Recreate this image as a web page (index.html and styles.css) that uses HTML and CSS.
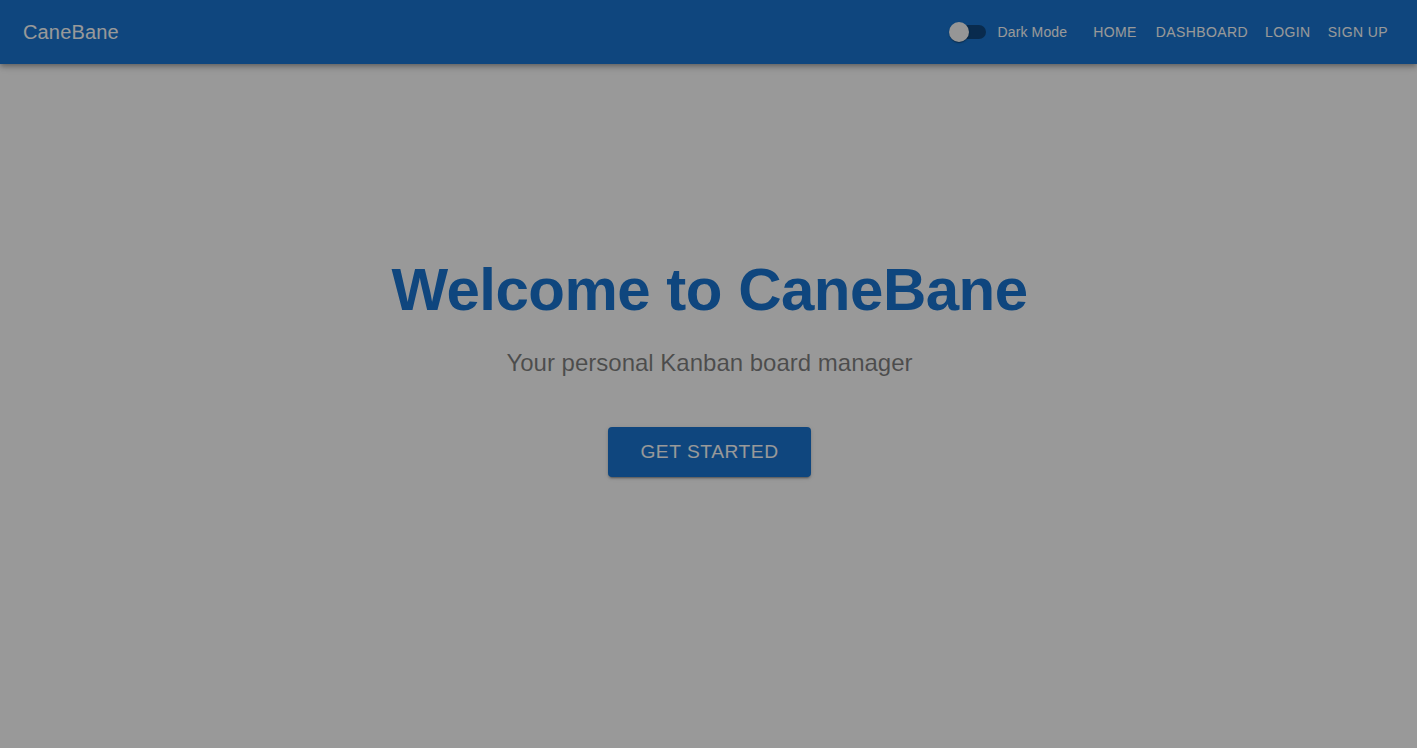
FILE: index.html
```html
<!DOCTYPE html>
<html lang="en">
<head>
<meta charset="utf-8">
<title>CaneBane</title>
<link rel="stylesheet" href="styles.css">
</head>
<body>
<header class="appbar">
  <div class="toolbar">
    <div class="brand">CaneBane</div>
    <div class="nav">
      <label class="theme-toggle">
        <span class="switch">
          <span class="track"></span>
          <span class="thumb"></span>
        </span>
        <span class="toggle-label">Dark Mode</span>
      </label>
      <a class="nav-link nav-home" href="#">Home</a>
      <a class="nav-link" href="#">Dashboard</a>
      <a class="nav-link" href="#">Login</a>
      <a class="nav-link" href="#">Sign Up</a>
    </div>
  </div>
</header>
<main class="hero">
  <h1 class="hero-title">Welcome to CaneBane</h1>
  <p class="hero-subtitle">Your personal Kanban board manager</p>
  <a class="cta" href="#">Get Started</a>
</main>
<div class="backdrop"></div>
</body>
</html>
```

FILE: styles.css
```css
* { box-sizing: border-box; }
html, body {
  margin: 0;
  padding: 0;
  height: 100%;
}
body {
  font-family: "Liberation Sans", Arial, sans-serif;
  background: #ffffff;
  color: rgba(0, 0, 0, 0.87);
  overflow: hidden;
}
.appbar {
  background: #1976d2;
  color: #ffffff;
  box-shadow: 0 2px 4px -1px rgba(0,0,0,0.2), 0 4px 5px 0 rgba(0,0,0,0.14), 0 1px 10px 0 rgba(0,0,0,0.12);
  position: relative;
  z-index: 2;
}
.toolbar {
  height: 64px;
  display: flex;
  align-items: center;
  justify-content: space-between;
  padding: 0 21px 0 23px;
}
.brand {
  font-size: 20px;
  line-height: 1.6;
  letter-spacing: 0.0075em;
}
.nav {
  display: flex;
  align-items: center;
}
.theme-toggle {
  display: flex;
  align-items: center;
  margin-right: 17px;
}
.switch {
  position: relative;
  width: 58px;
  height: 38px;
  padding: 12px;
  display: inline-block;
  margin-right: -1px;
}
.track {
  display: block;
  width: 34px;
  height: 14px;
  border-radius: 7px;
  background: rgba(0, 0, 0, 0.38);
}
.thumb {
  position: absolute;
  left: 9px;
  top: 9px;
  width: 20px;
  height: 20px;
  border-radius: 50%;
  background: #fafafa;
  box-shadow: 0 2px 1px -1px rgba(0,0,0,0.2), 0 1px 1px 0 rgba(0,0,0,0.14), 0 1px 3px 0 rgba(0,0,0,0.12);
}
.toggle-label {
  font-size: 14px;
  line-height: 1.5;
  letter-spacing: 0.00938em;
}
.nav-link {
  color: #ffffff;
  text-decoration: none;
  text-transform: uppercase;
  font-size: 14px;
  font-weight: 500;
  line-height: 1.75;
  letter-spacing: 0.02857em;
  padding: 6px 8px;
  margin-left: 1px;
}
.nav-home {
  margin-right: 2px;
}
.hero {
  display: flex;
  flex-direction: column;
  align-items: center;
  padding-top: 190px;
  text-align: center;
}
.hero-title {
  margin: 0 0 21px;
  font-size: 60px;
  font-weight: 700;
  line-height: 1.2;
  letter-spacing: -0.00833em;
  color: #1976d2;
  padding-left: 2px;
}
.hero-subtitle {
  margin: 0 0 48px;
  font-size: 24px;
  font-weight: 400;
  line-height: 1.334;
  color: rgba(0, 0, 0, 0.5);
  padding-left: 2px;
}
.cta {
  display: inline-block;
  background: #1976d2;
  color: #ffffff;
  text-decoration: none;
  text-transform: uppercase;
  font-size: 19.2px;
  font-weight: 500;
  line-height: 1.75;
  letter-spacing: 0.02857em;
  padding: 8px 32px;
  border-radius: 4px;
  margin-left: 2px;
  box-shadow: 0 3px 1px -2px rgba(0,0,0,0.2), 0 2px 2px 0 rgba(0,0,0,0.14), 0 1px 5px 0 rgba(0,0,0,0.12);
}
.backdrop {
  position: fixed;
  inset: 0;
  background: rgba(0, 0, 0, 0.4);
  z-index: 10;
}
```
